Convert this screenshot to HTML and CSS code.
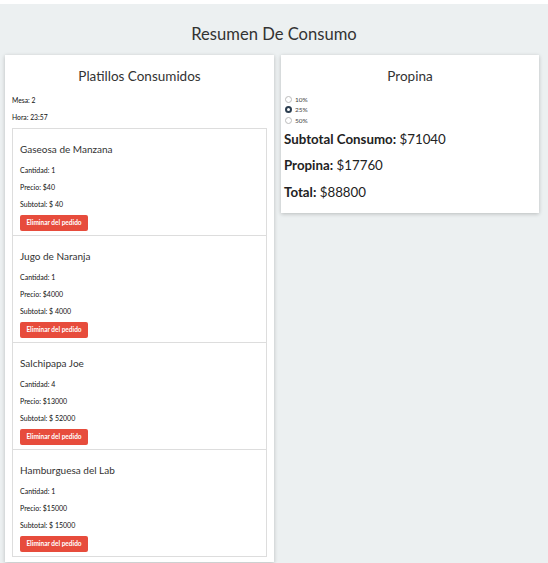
FILE: index.html
```html
<!DOCTYPE html>
<html lang="es">
<head>
<meta charset="utf-8">
<title>Resumen De Consumo</title>
<link rel="stylesheet" href="styles.css">
</head>
<body>
<div class="page">
  <h1 class="page-title">Resumen De Consumo</h1>
  <div class="columns">
    <section class="card card-orders">
      <h2 class="card-title">Platillos Consumidos</h2>
      <p class="meta">Mesa: 2</p>
      <p class="meta">Hora: 23:57</p>
      <div class="order-list">
        <div class="order">
          <h3 class="order-name">Gaseosa de Manzana</h3>
          <p class="order-line">Cantidad: 1</p>
          <p class="order-line">Precio: $40</p>
          <p class="order-line">Subtotal: $ 40</p>
          <button class="btn-remove">Eliminar del pedido</button>
        </div>
        <div class="order">
          <h3 class="order-name">Jugo de Naranja</h3>
          <p class="order-line">Cantidad: 1</p>
          <p class="order-line">Precio: $4000</p>
          <p class="order-line">Subtotal: $ 4000</p>
          <button class="btn-remove">Eliminar del pedido</button>
        </div>
        <div class="order">
          <h3 class="order-name">Salchipapa Joe</h3>
          <p class="order-line">Cantidad: 4</p>
          <p class="order-line">Precio: $13000</p>
          <p class="order-line">Subtotal: $ 52000</p>
          <button class="btn-remove">Eliminar del pedido</button>
        </div>
        <div class="order">
          <h3 class="order-name">Hamburguesa del Lab</h3>
          <p class="order-line">Cantidad: 1</p>
          <p class="order-line">Precio: $15000</p>
          <p class="order-line">Subtotal: $ 15000</p>
          <button class="btn-remove">Eliminar del pedido</button>
        </div>
      </div>
    </section>
    <section class="card card-tip">
      <h2 class="card-title">Propina</h2>
      <div class="tip-options">
        <label class="tip-option"><input type="radio" name="tip" class="radio"> 10%</label>
        <label class="tip-option"><input type="radio" name="tip" class="radio" checked> 25%</label>
        <label class="tip-option"><input type="radio" name="tip" class="radio"> 50%</label>
      </div>
      <p class="total-line"><strong>Subtotal Consumo:</strong> $71040</p>
      <p class="total-line"><strong>Propina:</strong> $17760</p>
      <p class="total-line"><strong>Total:</strong> $88800</p>
    </section>
  </div>
</div>
</body>
</html>
```

FILE: styles.css
```css
* { box-sizing: border-box; }
html, body { margin: 0; padding: 0; }
body {
  background: #ffffff;
  font-family: Lato, "Open Sans", sans-serif;
  color: #222;
}
.page {
  margin-top: 4px;
  background: #ecf0f1;
  min-height: 559px;
  overflow: hidden;
}
.page-title {
  margin: 19px 0 10px;
  text-align: center;
  font-size: 16.6px;
  line-height: 22px;
  font-weight: 400;
  color: #333;
}
.columns {
  display: flex;
  align-items: flex-start;
  gap: 7px;
  padding: 0 9px 0 5px;
}
.card {
  background: #fff;
  box-shadow: 0 1px 4px rgba(0, 0, 0, 0.22);
}
.card-orders {
  width: 269px;
  padding: 12px 7px 5px;
}
.card-tip {
  width: 258px;
  padding: 12px 3px 12px;
}
.card-title {
  margin: 0;
  text-align: center;
  font-size: 13.5px;
  line-height: 18px;
  font-weight: 400;
  color: #333;
}
.meta {
  margin: 0;
  font-size: 6.8px;
  line-height: 10px;
  color: #111;
}
.card-title + .meta { margin-top: 10px; }
.meta + .meta { margin-top: 7px; }
.order-list {
  margin-top: 6px;
  border: 1px solid #ddd;
}
.order {
  padding: 13px 7px 4px;
  height: 106px;
}
.order + .order {
  border-top: 1px solid #ddd;
  height: 107px;
}
.order-name {
  margin: 0 0 9px;
  font-size: 10px;
  line-height: 14px;
  font-weight: 400;
  color: #333;
}
.order-line {
  margin: 0 0 7px;
  font-size: 7px;
  line-height: 10px;
  color: #111;
}
.order-line:nth-of-type(3) { margin-bottom: 6px; }
.btn-remove {
  display: block;
  width: 68px;
  height: 16px;
  padding: 0;
  border: none;
  border-radius: 2px;
  background: #e74c3c;
  color: #fff;
  font-family: Lato, sans-serif;
  font-size: 6.5px;
  font-weight: 700;
  line-height: 16px;
  text-align: center;
}
.tip-options {
  margin-top: 9px;
  display: flex;
  flex-direction: column;
}
.tip-option {
  display: flex;
  align-items: center;
  gap: 1px;
  height: 10.5px;
  font-size: 6.5px;
  color: #444;
}
.radio {
  appearance: none;
  -webkit-appearance: none;
  margin: 0 2px 0 1px;
  width: 7px;
  height: 7px;
  border-radius: 50%;
  border: 1px solid #bbb;
  background: #fff;
}
.radio:checked {
  border: 2px solid #2c3e50;
  background: #fff;
}
.total-line {
  margin: 0;
  font-size: 13.3px;
  line-height: 17px;
  color: #222;
}
.tip-options + .total-line { margin-top: 5px; }
.total-line + .total-line { margin-top: 9.5px; }
.total-line strong { font-weight: 700; }
```
